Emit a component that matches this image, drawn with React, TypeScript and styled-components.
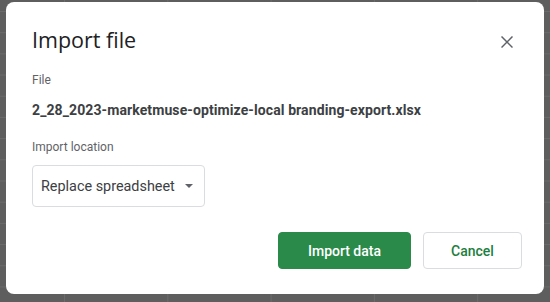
import React from "react";
import styled, { createGlobalStyle } from "styled-components";

const GlobalStyle = createGlobalStyle`
  html, body {
    margin: 0;
    padding: 0;
    background-color: #5e5e5e;
    background-image:
      linear-gradient(to right, #6b6b6b 1px, transparent 1px),
      linear-gradient(to bottom, #6b6b6b 1px, transparent 1px);
    background-size: 103.3px 21.2px;
    background-position: 64px 11px;
    font-family: Roboto, "Liberation Sans", sans-serif;
  }
`

const Overlay = styled.div`
  width: 550px;
  height: 302px;
  box-sizing: border-box;
  padding: 2px 6px 0 6px;
`
const Dialog = styled.div`
  width: 538px;
  height: 292px;
  box-sizing: border-box;
  background: #ffffff;
  border-radius: 8px;
  padding: 22px 30px 0 26px;
  display: flex;
  flex-direction: column;
`
const Header = styled.div`
  display: flex;
  justify-content: space-between;
  align-items: flex-start;
`
const Title = styled.h1`
  margin: 0;
  font-family: "Open Sans", Roboto, sans-serif;
  font-weight: 400;
  font-size: 21.5px;
  line-height: 32px;
  color: #202124;
`
const CloseButton = styled.button`
  width: 14px;
  height: 14px;
  margin-top: 11px;
  padding: 0;
  border: none;
  background: none;
  display: flex;
  align-items: center;
  justify-content: center;
  cursor: pointer;
`
const Label = styled.div<{ $top: number }>`
  margin-top: ${(p) => p.$top}px;
  font-size: 12px;
  line-height: 16px;
  color: #5f6368;
`
const FileName = styled.div`
  margin-top: 12px;
  font-size: 14px;
  font-weight: 700;
  line-height: 20px;
  letter-spacing: 0.1px;
  color: #3c4043;
`
const Select = styled.div`
  margin-top: 10px;
  width: 173px;
  height: 42px;
  box-sizing: border-box;
  border: 1px solid #dadce0;
  border-radius: 4px;
  display: flex;
  align-items: center;
  gap: 10px;
  padding: 0 0 0 8px;
  font-size: 14.4px;
  color: #3c4043;
`
const Caret = styled.span`
  width: 0;
  height: 0;
  border-left: 4px solid transparent;
  border-right: 4px solid transparent;
  border-top: 4px solid #5f6368;
`
const Footer = styled.div`
  margin-top: auto;
  margin-bottom: 25px;
  display: flex;
  justify-content: flex-end;
  gap: 12px;
  margin-right: -8px;
`
const Button = styled.button<{ $primary?: boolean }>`
  height: 37px;
  box-sizing: border-box;
  padding: 0;
  width: ${(p) => (p.$primary ? "133px" : "99px")};
  border-radius: 4px;
  border: 1px solid ${(p) => (p.$primary ? "#2a8a4a" : "#dadce0")};
  background: ${(p) => (p.$primary ? "#2a8a4a" : "#ffffff")};
  color: ${(p) => (p.$primary ? "#ffffff" : "#1e7e3e")};
  font-family: Roboto, "Liberation Sans", sans-serif;
  font-size: 14px;
  font-weight: 500;
  cursor: pointer;
`

export default function App() {
    return (
        <>
            <GlobalStyle />
            <Overlay>
                <Dialog>
                    <Header>
                        <Title>Import file</Title>
                        <CloseButton aria-label="Close">
                            <svg width="12" height="12" viewBox="0 0 12 12">
                                <path d="M0.5 0.5L11.5 11.5M11.5 0.5L0.5 11.5" stroke="#5f6368" strokeWidth="1.5" />
                            </svg>
                        </CloseButton>
                    </Header>
                    <Label $top={16}>File</Label>
                    <FileName>2_28_2023-marketmuse-optimize-local branding-export.xlsx</FileName>
                    <Label $top={19}>Import location</Label>
                    <Select>
                        Replace spreadsheet
                        <Caret />
                    </Select>
                    <Footer>
                        <Button $primary>Import data</Button>
                        <Button>Cancel</Button>
                    </Footer>
                </Dialog>
            </Overlay>
        </>
    )
}
